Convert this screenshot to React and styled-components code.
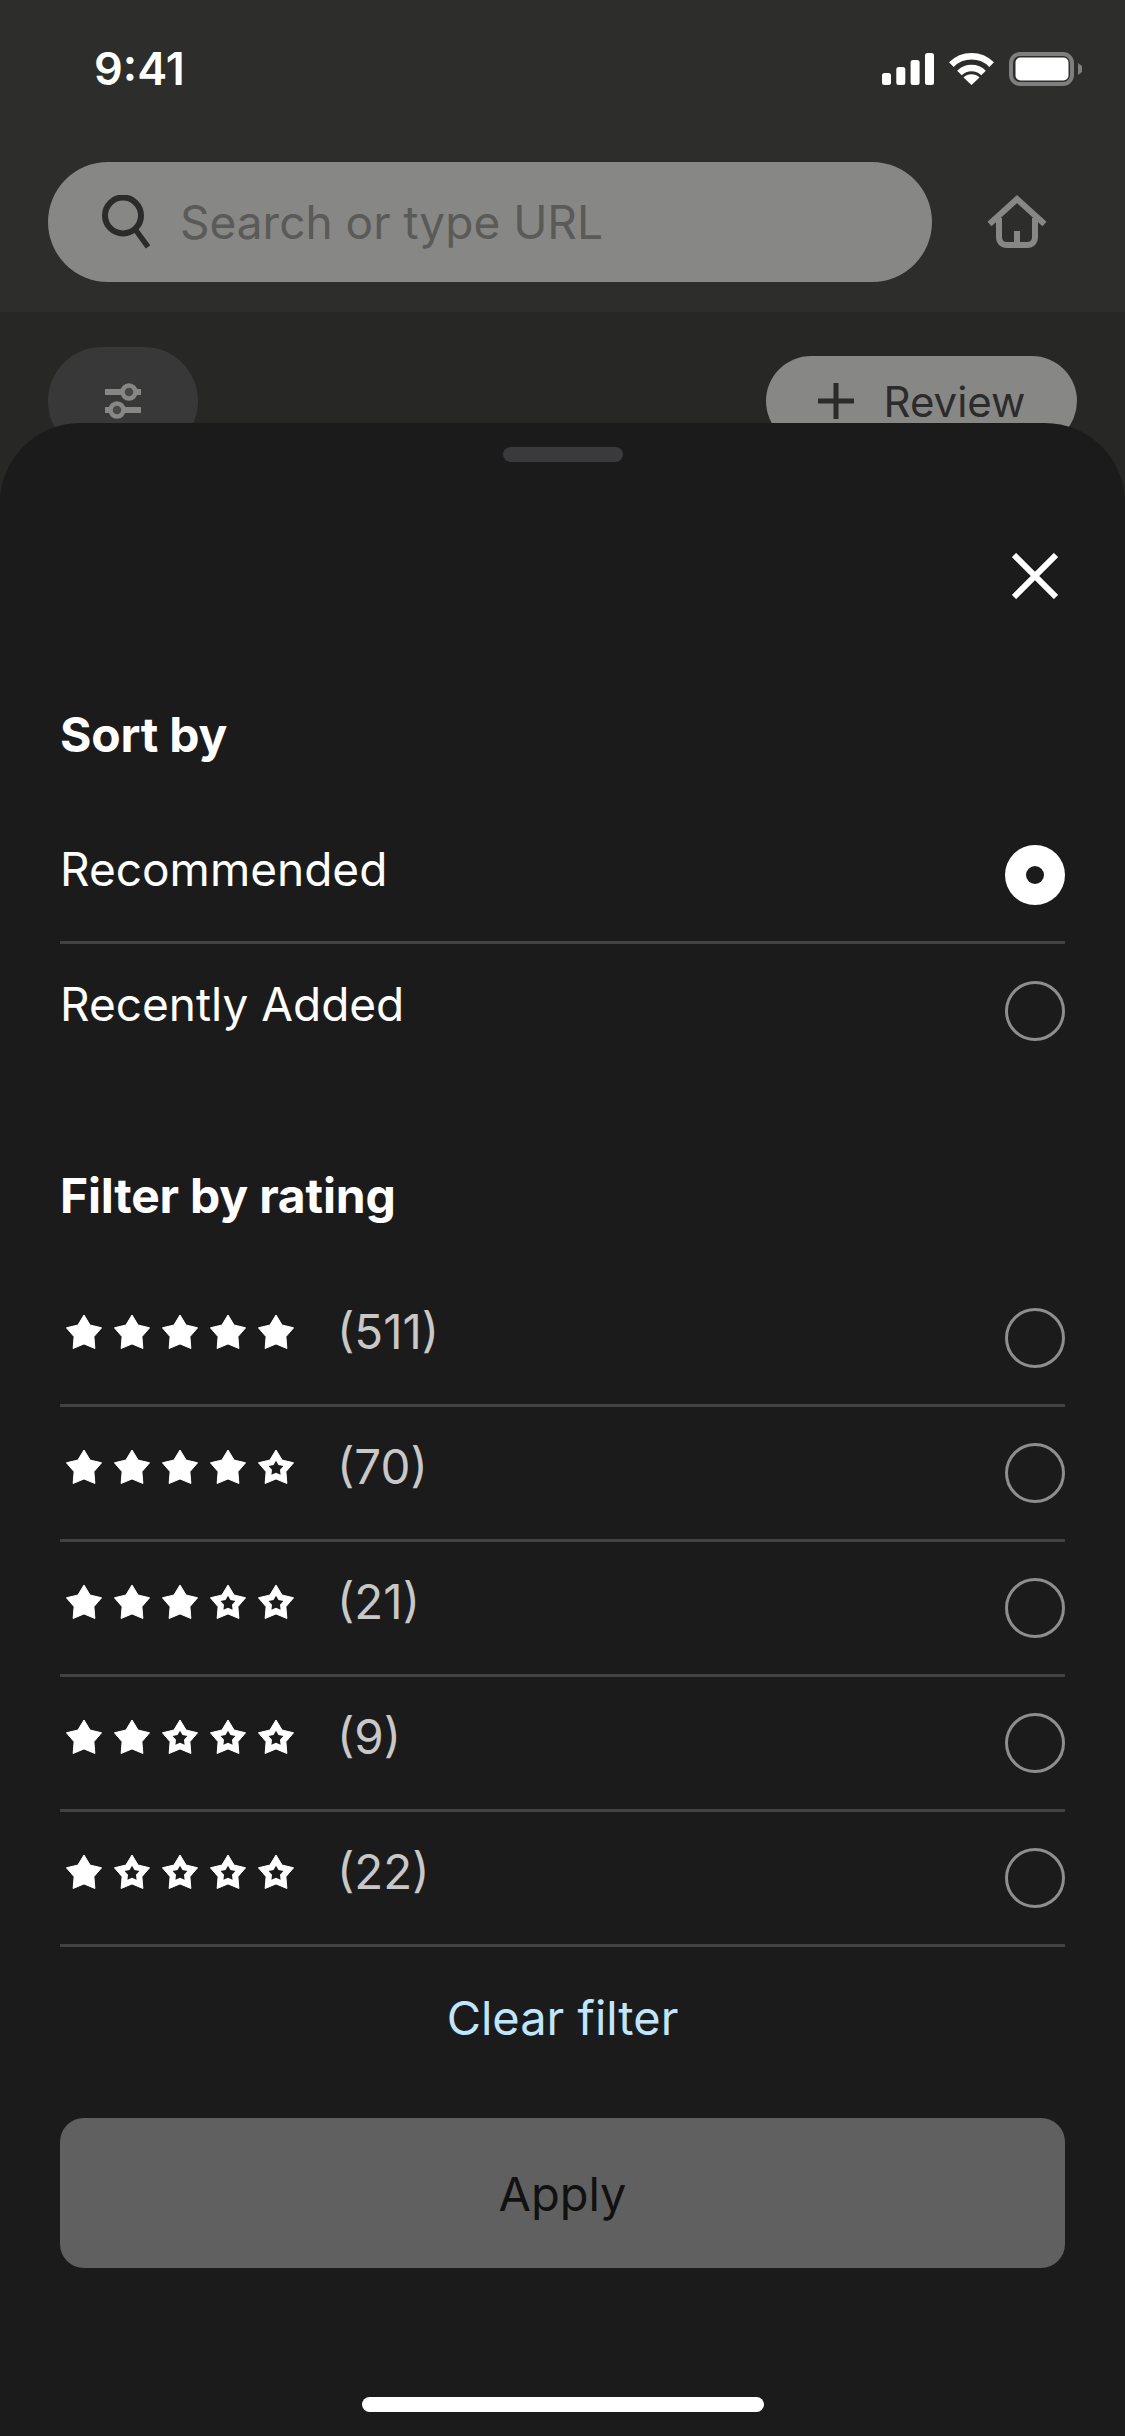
import React from 'react';
import styled, { createGlobalStyle } from 'styled-components';

const GlobalStyle = createGlobalStyle`
  html, body { margin: 0; padding: 0; background: #272726; }
  * { box-sizing: border-box; }
  body { font-family: Inter, "Noto Sans", "Liberation Sans", sans-serif; }
`;

const Screen = styled.div`
  position: relative;
  width: 1125px;
  height: 2436px;
  overflow: hidden;
  background: #272726;
`;

const Header = styled.header`
  height: 312px;
  background: #2d2d2c;
  padding: 0 48px;
`;

const StatusBar = styled.div`
  height: 162px;
  display: flex;
  justify-content: space-between;
  align-items: flex-start;
  padding: 42px 0 0 46px;
`;

const Time = styled.span`
  color: #fff;
  font-size: 45px;
  line-height: 54px;
  font-weight: 600;
`;

const StatusIcons = styled.div`
  display: flex;
  align-items: center;
  gap: 15px;
  padding: 10px 0 0;
  margin-right: -5px;
`;

const UrlRow = styled.div`
  display: flex;
  align-items: center;
  gap: 55px;
`;

const SearchBar = styled.div`
  width: 884px;
  height: 120px;
  border-radius: 60px;
  background: #878785;
  display: flex;
  align-items: center;
  gap: 30px;
  padding-left: 54px;
`;

const Placeholder = styled.span`
  color: #5a5a58;
  font-size: 46px;
`;

const Toolbar = styled.div`
  display: flex;
  justify-content: space-between;
  align-items: center;
  padding: 35px 48px 0;
`;

const FilterPill = styled.div`
  width: 150px;
  height: 108px;
  border-radius: 54px;
  background: #383838;
  display: flex;
  align-items: center;
  justify-content: center;
`;

const ReviewPill = styled.div`
  width: 311px;
  height: 90px;
  border-radius: 45px;
  background: #878785;
  color: #2b2b2b;
  font-size: 42px;
  display: flex;
  align-items: center;
  justify-content: center;
  gap: 30px;
`;

const Sheet = styled.section`
  position: absolute;
  left: 0;
  right: 0;
  top: 423px;
  bottom: 0;
  background: #1b1b1b;
  border-radius: 80px 80px 0 0;
  padding: 24px 60px 0;
  display: flex;
  flex-direction: column;
`;

const Handle = styled.div`
  width: 120px;
  height: 15px;
  border-radius: 8px;
  background: #3a3a3c;
  align-self: center;
`;

const CloseButton = styled.div`
  align-self: flex-end;
  width: 46px;
  height: 46px;
  margin: 91px 7px 0 0;
  display: flex;
`;

const Heading = styled.h2`
  margin: ${(p) => p.$top}px 0 ${(p) => p.$bottom}px;
  color: #fff;
  font-size: 48px;
  line-height: 60px;
  font-weight: 700;
  letter-spacing: -0.2px;
`;

const Row = styled.div`
  height: ${(p) => (p.$plain ? 134 : 135)}px;
  display: flex;
  align-items: center;
  justify-content: space-between;
  border-bottom: ${(p) => (p.$plain ? 'none' : '3px solid #424242')};
`;

const Label = styled.span`
  color: #fff;
  font-size: 46px;
  line-height: 60px;
  margin-bottom: ${(p) => (p.$raised ? 14 : 12)}px;
`;

const RatingLabel = styled.div`
  display: flex;
  align-items: center;
  gap: 43px;
  margin-bottom: 12px;
  padding-left: 6px;
`;

const Stars = styled.div`
  display: flex;
  gap: 12px;
`;

const Count = styled.span`
  color: #c8c8c8;
  font-size: 47.500px;
  font-weight: 400;
  line-height: 60px;
`;

const Radio = styled.div`
  width: 60px;
  height: 60px;
  border-radius: 50%;
  border: 3px solid #8e8e8e;
  flex: none;
`;

const RadioOn = styled.div`
  width: 60px;
  height: 60px;
  border-radius: 50%;
  background: #fff;
  flex: none;
  display: flex;
  align-items: center;
  justify-content: center;
  &::after {
    content: '';
    width: 18px;
    height: 18px;
    border-radius: 50%;
    background: #1b1b1b;
  }
`;

const ClearFilter = styled.div`
  margin-top: 41px;
  text-align: center;
  color: #c0e6ff;
  font-size: 47px;
  line-height: 60px;
`;

const ApplyButton = styled.div`
  margin-top: 70px;
  height: 150px;
  border-radius: 24px;
  background: #606060;
  color: #111;
  font-size: 47px;
  display: flex;
  align-items: center;
  justify-content: center;
`;

const HomeIndicator = styled.div`
  margin-top: 129px;
  width: 402px;
  height: 15px;
  border-radius: 8px;
  background: #fff;
  align-self: center;
`;

const starPoints = (r, ri, c) => {
  const pts = [];
  for (let i = 0; i < 10; i++) {
    const rad = i % 2 === 0 ? r : ri;
    const a = (Math.PI / 5) * i - Math.PI / 2;
    pts.push(`${(c + rad * Math.cos(a)).toFixed(2)} ${(c + 1.5 + rad * Math.sin(a)).toFixed(2)}`);
  }
  return 'M' + pts.join('L') + 'Z';
};

const Star = ({ filled }) => (
  <svg width="36" height="36" viewBox="0 0 36 36">
    <path
      fill="#fff"
      stroke="#fff"
      strokeWidth="1"
      strokeLinejoin="round"
      d={starPoints(18.5, 10.4, 18)}
    />
    {!filled && <path fill="#1b1b1b" d={starPoints(7.8, 4.2, 18)} />}
  </svg>
);

const ratings = [
  { stars: 5, count: 511 },
  { stars: 4, count: 70 },
  { stars: 3, count: 21 },
  { stars: 2, count: 9 },
  { stars: 1, count: 22 },
];

const App = () => (
  <Screen>
    <GlobalStyle />
    <Header>
      <StatusBar>
        <Time>9:41</Time>
        <StatusIcons>
          <svg width="52" height="32" viewBox="0 0 52 32" fill="#fff">
            <rect x="0" y="20" width="9" height="12" rx="2.500" />
            <rect x="14.300" y="14" width="9" height="18" rx="2.500" />
            <rect x="28.600" y="7" width="9" height="25" rx="2.500" />
            <rect x="43" y="0" width="9" height="32" rx="2.500" />
          </svg>
          <svg width="45" height="32" viewBox="0 0 45 32" fill="none" stroke="#fff" strokeWidth="6.500">
            <path d="M2.340 11.660A28.500 28.500 0 0 1 42.660 11.660" />
            <path d="M10.480 20A17 17 0 0 1 34.520 20" />
            <path fill="#fff" stroke="none" d="M22.500 32L14.500 24.500A11.500 11.500 0 0 1 30.500 24.500Z" />
          </svg>
          <svg width="73" height="34" viewBox="0 0 73 34" fill="none">
            <rect x="2" y="2" width="61" height="30" rx="9" stroke="#7f7f7f" strokeWidth="4" />
            <rect x="6.500" y="5.500" width="53" height="23" rx="5" fill="#fff" />
            <path d="M69 11L73 14V20L69 23Z" fill="#7f7f7f" />
          </svg>
        </StatusIcons>
      </StatusBar>
      <UrlRow>
        <SearchBar>
          <svg width="48" height="54" viewBox="0 0 48 54" fill="none" stroke="#2b2b2b" strokeWidth="6">
            <circle cx="21" cy="20.500" r="18" />
            <path d="M33 34L46 52" strokeWidth="5.500" />
          </svg>
          <Placeholder>Search or type URL</Placeholder>
        </SearchBar>
        <svg width="60" height="56" viewBox="0 0 60 56" fill="none" stroke="#878785" strokeWidth="6">
          <path d="M2.500 30L30 5L57.500 30" />
          <path d="M12 24V43C12 48 15 51 20 51H40C45 51 48 48 48 43V24" />
          <path d="M30 37V51" />
        </svg>
      </UrlRow>
    </Header>
    <Toolbar>
      <FilterPill>
        <svg width="36" height="38" viewBox="0 0 36 38" fill="none" stroke="#878785" strokeWidth="6">
          <path d="M0 10H36M0 28H36" />
          <circle cx="24" cy="10" r="6.500" fill="#474746" strokeWidth="4.500" />
          <circle cx="12" cy="28" r="6.500" fill="#474746" strokeWidth="4.500" />
        </svg>
      </FilterPill>
      <ReviewPill>
        <svg width="36" height="36" viewBox="0 0 36 36" fill="none" stroke="#2b2b2b" strokeWidth="5">
          <path d="M18 0V36M0 18H36" />
        </svg>
        Review
      </ReviewPill>
    </Toolbar>
    <Sheet>
      <Handle />
      <CloseButton>
        <svg width="46" height="46" viewBox="0 0 46 46" fill="none" stroke="#fff" strokeWidth="6">
          <path d="M2 2L44 44M44 2L2 44" />
        </svg>
      </CloseButton>
      <Heading $top={106} $bottom={44}>Sort by</Heading>
      <Row>
        <Label>Recommended</Label>
        <RadioOn />
      </Row>
      <Row $plain>
        <Label $raised>Recently Added</Label>
        <Radio />
      </Row>
      <Heading $top={88} $bottom={46}>Filter by rating</Heading>
      {ratings.map((r) => (
        <Row key={r.count}>
          <RatingLabel>
            <Stars>
              {[1, 2, 3, 4, 5].map((n) => (
                <Star key={n} filled={n <= r.stars} />
              ))}
            </Stars>
            <Count>({r.count})</Count>
          </RatingLabel>
          <Radio />
        </Row>
      ))}
      <ClearFilter>Clear filter</ClearFilter>
      <ApplyButton>Apply</ApplyButton>
      <HomeIndicator />
    </Sheet>
  </Screen>
);

export default App;
